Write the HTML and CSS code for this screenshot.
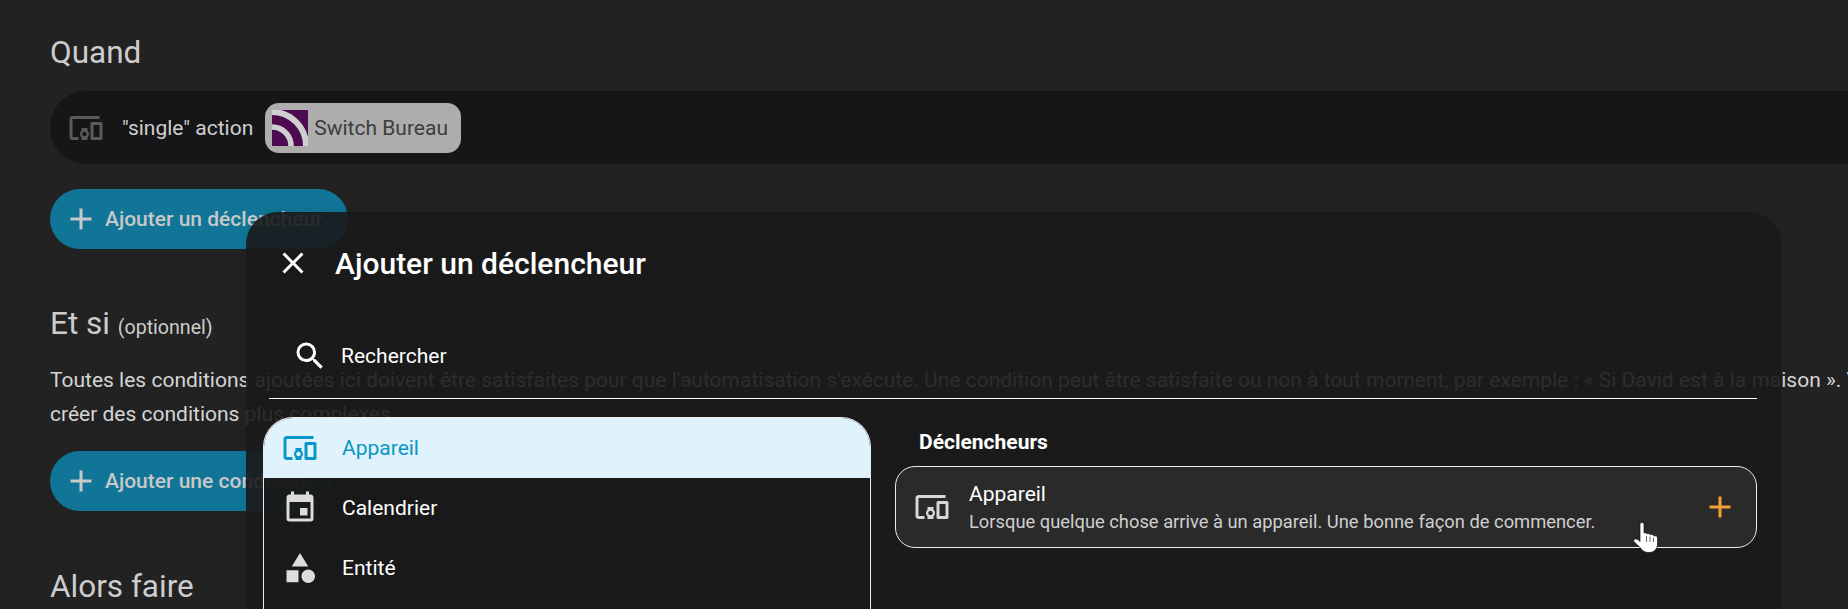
FILE: index.html
```html
<!DOCTYPE html>
<html lang="fr">
<head>
<meta charset="utf-8">
<title>Automatisation</title>
<link rel="stylesheet" href="styles.css">
</head>
<body>
<main class="page">
  <h2 class="heading heading-first">Quand</h2>
  <div class="trigger-row">
    <svg class="icon icon-dim" viewBox="0 0 24 24"><path d="M3 6H21V4H3C1.9 4 1 4.9 1 6V18C1 19.1 1.9 20 3 20H7V18H3V6M13 12H9V13.78C8.39 14.33 8 15.11 8 16C8 16.89 8.39 17.67 9 18.22V20H13V18.22C13.61 17.67 14 16.88 14 16S13.61 14.33 13 13.78V12M11 17.5C10.17 17.5 9.5 16.83 9.5 16S10.17 14.5 11 14.5 12.5 15.17 12.5 16 11.83 17.5 11 17.5M22 8H16C15.5 8 15 8.5 15 9V19C15 19.5 15.5 20 16 20H22C22.5 20 23 19.5 23 19V9C23 8.5 22.5 8 22 8M21 18H17V10H21V18Z"/></svg>
    <span class="trigger-text">"single" action</span>
    <span class="chip">
      <svg class="chip-logo" viewBox="0 0 36 36">
        <rect width="36" height="36" fill="#4e0a50"/>
        <g fill="none" stroke="#cfcfcf">
          <path stroke-width="5.5" d="M0 17 A19 19 0 0 1 19 36"/>
          <path stroke-width="6" d="M0 2 A34 34 0 0 1 34 36"/>
        </g>
      </svg>
      Switch Bureau
    </span>
  </div>
  <button class="add-btn"><svg class="icon" viewBox="0 0 24 24"><path d="M19,13H13V19H11V13H5V11H11V5H13V11H19V13Z"/></svg>Ajouter un déclencheur</button>
  <h2 class="heading">Et si <small class="optional">(optionnel)</small></h2>
  <p class="para">Toutes les conditions ajoutées ici doivent être satisfaites pour que l'automatisation s'exécute. Une condition peut être satisfaite ou non à tout moment, par exemple : « Si David est à la maison ». V<br>créer des conditions plus complexes.</p>
  <button class="add-btn"><svg class="icon" viewBox="0 0 24 24"><path d="M19,13H13V19H11V13H5V11H11V5H13V11H19V13Z"/></svg>Ajouter une condition</button>
  <h2 class="heading">Alors faire</h2>
</main>

<section class="dialog">
  <header class="dialog-head">
    <svg class="icon icon-white" viewBox="0 0 24 24"><path d="M19,6.41L17.59,5L12,10.59L6.41,5L5,6.41L10.59,12L5,17.59L6.41,19L12,13.41L17.59,19L19,17.59L13.41,12L19,6.41Z"/></svg>
    <h1 class="dialog-title">Ajouter un déclencheur</h1>
  </header>
  <div class="search">
    <svg class="icon icon-white" viewBox="0 0 24 24"><path d="M9.5,3A6.5,6.5 0 0,1 16,9.5C16,11.11 15.41,12.59 14.44,13.73L14.71,14H15.5L20.5,19L19,20.5L14,15.5V14.71L13.73,14.44C12.59,15.41 11.11,16 9.5,16A6.5,6.5 0 0,1 3,9.5A6.5,6.5 0 0,1 9.5,3M9.5,5C7,5 5,7 5,9.5C5,12 7,14 9.5,14C12,14 14,12 14,9.5C14,7 12,5 9.5,5Z"/></svg>
    <span class="search-label">Rechercher</span>
  </div>
  <div class="dialog-body">
    <ul class="groups">
      <li class="group group-active"><svg class="icon" viewBox="0 0 24 24"><path d="M3 6H21V4H3C1.9 4 1 4.9 1 6V18C1 19.1 1.9 20 3 20H7V18H3V6M13 12H9V13.78C8.39 14.33 8 15.11 8 16C8 16.89 8.39 17.67 9 18.22V20H13V18.22C13.61 17.67 14 16.88 14 16S13.61 14.33 13 13.78V12M11 17.5C10.17 17.5 9.5 16.83 9.5 16S10.17 14.5 11 14.5 12.5 15.17 12.5 16 11.83 17.5 11 17.5M22 8H16C15.5 8 15 8.5 15 9V19C15 19.5 15.5 20 16 20H22C22.5 20 23 19.5 23 19V9C23 8.5 22.5 8 22 8M21 18H17V10H21V18Z"/></svg>Appareil</li>
      <li class="group"><svg class="icon" viewBox="0 0 24 24"><path d="M19,19H5V8H19M16,1V3H8V1H6V3H5C3.89,3 3,3.89 3,5V19A2,2 0 0,0 5,21H19A2,2 0 0,0 21,19V5C21,3.89 20.1,3 19,3H18V1M17,12H12V17H17V12Z"/></svg>Calendrier</li>
      <li class="group"><svg class="icon" viewBox="0 0 24 24"><path d="M11,13.5V21.5H3V13.5H11M12,2L17.5,11H6.5L12,2M17.5,13C20,13 22,15 22,17.5C22,20 20,22 17.5,22C15,22 13,20 13,17.5C13,15 15,13 17.5,13Z"/></svg>Entité</li>
    </ul>
    <div class="results">
      <h3 class="results-title">Déclencheurs</h3>
      <div class="card">
        <svg class="icon" viewBox="0 0 24 24"><path d="M3 6H21V4H3C1.9 4 1 4.9 1 6V18C1 19.1 1.9 20 3 20H7V18H3V6M13 12H9V13.78C8.39 14.33 8 15.11 8 16C8 16.89 8.39 17.67 9 18.22V20H13V18.22C13.61 17.67 14 16.88 14 16S13.61 14.33 13 13.78V12M11 17.5C10.17 17.5 9.5 16.83 9.5 16S10.17 14.5 11 14.5 12.5 15.17 12.5 16 11.83 17.5 11 17.5M22 8H16C15.5 8 15 8.5 15 9V19C15 19.5 15.5 20 16 20H22C22.5 20 23 19.5 23 19V9C23 8.5 22.5 8 22 8M21 18H17V10H21V18Z"/></svg>
        <div class="card-text">
          <div class="card-title">Appareil</div>
          <div class="card-sub">Lorsque quelque chose arrive à un appareil. Une bonne façon de commencer.</div>
        </div>
        <svg class="icon icon-orange" viewBox="0 0 24 24"><path d="M19,13H13V19H11V13H5V11H11V5H13V11H19V13Z"/></svg>
      </div>
    </div>
  </div>
</section>

<svg class="cursor" viewBox="0 0 26 31"><path d="M9 0.5C10.2 0.5 11 1.3 11 2.5V11C12 10.5 13.5 10.7 14 11.8C15 11.2 16.8 11.4 17.3 12.8C18.5 12.2 20.5 12.6 21 14C22.5 13.4 24.5 14.2 24.5 16V22C24.5 27 21 30.5 16 30.5C12 30.5 9.5 29 7.5 26L4 22.5L0.8 19.5C0.2 18 1.5 16.5 3.5 17C5 17.3 6 18.5 7 19.5V2.5C7 1.3 7.8 0.5 9 0.5Z" fill="#fff" stroke="#111" stroke-width="0.7"/><path d="M13.5 14V20M17 14.5V20M20.5 15.5V20" stroke="#444" stroke-width="0.8" fill="none"/></svg>
</body>
</html>
```
FILE: styles.css
```css
* { box-sizing: border-box; }
html, body { margin: 0; height: 100%; overflow: hidden; }
body { background: #222222; color: #e1e1e1; font-family: Roboto, "Liberation Sans", sans-serif; position: relative; }

.icon { width: 36px; height: 36px; flex: none; fill: currentColor; display: block; }
.icon-dim { color: #5b5b5b; }
.icon-white { color: #fff; }
.icon-orange { color: #f2a033; }

.page { padding-left: 50px; width: 3000px; display: flex; flex-direction: column; align-items: flex-start; }
.heading { margin: 55px 0 0; font-size: 31.5px; font-weight: 400; line-height: 40px; color: #cdcdcd; }
.heading-first { margin-top: 33px; }
.optional { font-size: 19.6px; }
.trigger-row { margin-top: 18px; width: 100%; height: 73px; border-radius: 36px; background: #161618; display: flex; align-items: center; padding-left: 18px; }
.trigger-text { margin-left: 18px; font-size: 21px; color: #cfcfcf; }
.chip { margin-left: 12px; height: 50px; width: 196px; background: #adadad; border-radius: 14px; display: flex; align-items: center; padding-left: 7px; gap: 6px; font-size: 21px; color: #3c3c3c; }
.chip-logo { width: 36px; height: 36px; display: block; }
.add-btn { margin-top: 25px; height: 60px; border: 0; border-radius: 30px; background: #107596; color: #c8c8c8; font: 500 21px Roboto, sans-serif; display: flex; align-items: center; gap: 6px; padding: 0 25px 0 13px; }
.para { margin: 15px 0 0; font-size: 21px; line-height: 34px; color: #d5d5d5; white-space: nowrap; }
.para + .add-btn { margin-top: 20px; }
.para + .add-btn + .heading { margin-top: 56px; }

.dialog { position: absolute; left: 246px; top: 212px; width: 1535px; height: 397px; background: rgba(26, 26, 26, 0.9); border-radius: 32px 32px 0 0; box-shadow: 0 0 8px rgba(0, 0, 0, 0.06); padding-top: 30px; color: #fff; overflow: hidden; }
.dialog-head { display: flex; align-items: center; height: 42px; padding-left: 29px; gap: 24px; }
.dialog-title { margin: 0; font-size: 30px; font-weight: 500; }
.search { margin: 30px 24px 0 23px; height: 85px; border-bottom: 1.5px solid #fff; display: flex; align-items: center; gap: 13px; padding-left: 23px; }
.search-label { font-size: 21px; }
.dialog-body { display: grid; grid-template-columns: 608px 1fr; column-gap: 24px; margin-top: 18px; padding: 0 24px 0 17px; }
.groups { list-style: none; margin: 0; padding: 0; height: 300px; background: rgba(26, 26, 26, 0.7); border: 1.5px solid #ececec; border-bottom: 0; border-radius: 30px 30px 0 0; overflow: hidden; }
.group { height: 60px; display: flex; align-items: center; gap: 24px; padding-left: 18px; font-size: 21px; }
.group .icon { color: #dcdcdc; }
.group-active { background: #e0f2fb; color: #0a97c7; }
.group-active .icon { color: #0a97c7; }
.results-title { margin: 0; height: 49px; padding-left: 24px; font-size: 21px; font-weight: 700; line-height: 50px; }
.card { height: 82px; background: #2a2a2a; border: 1.5px solid #ececec; border-radius: 20px; display: flex; align-items: center; padding: 0 18px 0 18px; gap: 19px; }
.card .icon:first-child { color: #d8d8d8; }
.card-text { flex: 1; padding-top: 2px; }
.card-title { font-size: 21px; line-height: 28px; }
.card-sub { font-size: 18.33px; line-height: 28px; color: #cfcfcf; }
.cursor { position: absolute; left: 1633px; top: 522px; width: 26px; height: 31px; }
```
